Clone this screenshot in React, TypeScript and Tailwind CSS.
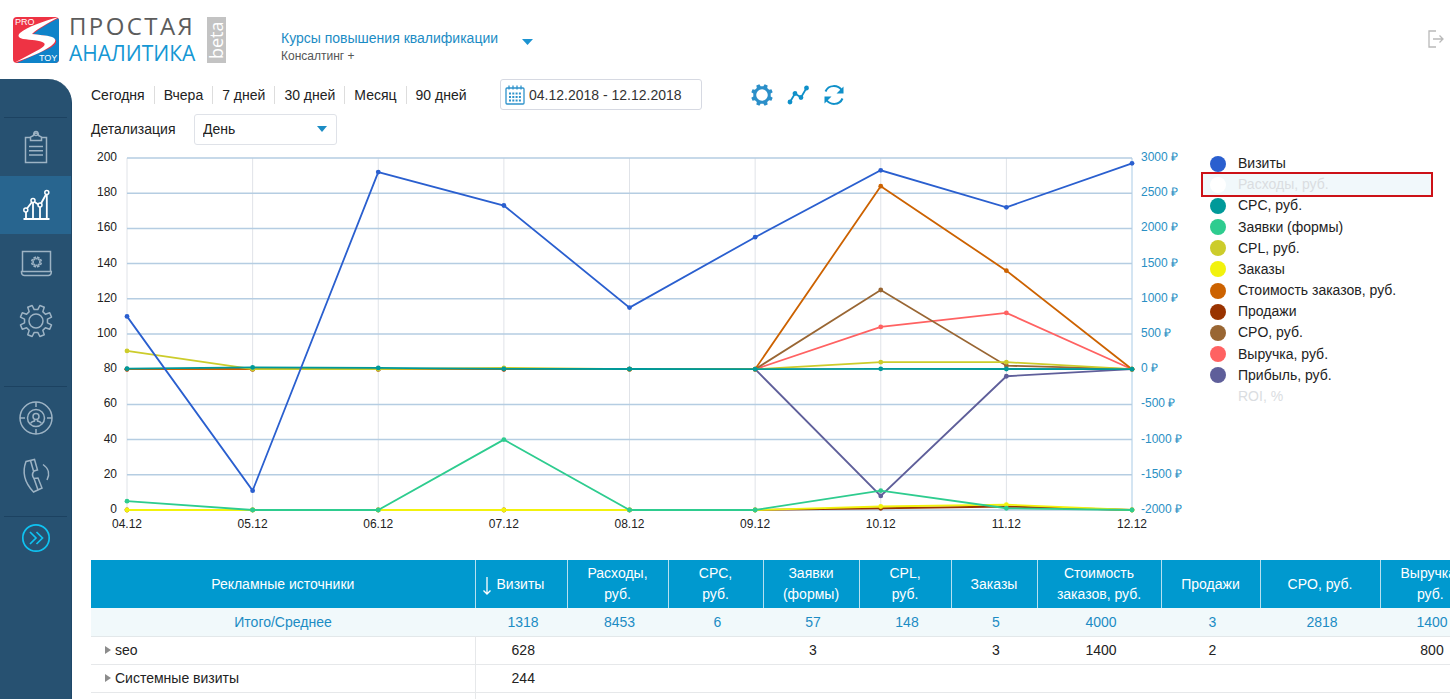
import { useState, type ReactNode } from 'react';
import clsx from 'clsx';

const DAYS = ['04.12', '05.12', '06.12', '07.12', '08.12', '09.12', '10.12', '11.12', '12.12'];

interface Series {
  name: string;
  color: string;
  axis: 'count' | 'money';
  values: number[];
}

/** Chart metrics in legend order. */
const SERIES: Series[] = [
  { name: 'Визиты', color: '#2a5fcf', axis: 'count', values: [110, 11, 192, 173, 115, 155, 193, 172, 197] },
  { name: 'Расходы, руб.', color: '#3399cc', axis: 'money', values: [] },
  { name: 'CPC, руб.', color: '#009999', axis: 'money', values: [8, 25, 18, 5, 3, 0, 5, 3, 0] },
  { name: 'Заявки (формы)', color: '#2ecc8f', axis: 'count', values: [5, 0, 0, 40, 0, 0, 11, 1, 0] },
  { name: 'CPL, руб.', color: '#cccc2b', axis: 'money', values: [260, 0, 0, 20, 0, 0, 100, 100, 0] },
  { name: 'Заказы', color: '#f2f20d', axis: 'count', values: [0, 0, 0, 0, 0, 0, 2, 3, 0] },
  { name: 'Стоимость заказов, руб.', color: '#cc6200', axis: 'money', values: [0, 0, 0, 0, 0, 0, 2600, 1400, 0] },
  { name: 'Продажи', color: '#993300', axis: 'count', values: [0, 0, 0, 0, 0, 0, 1, 2, 0] },
  { name: 'CPO, руб.', color: '#996633', axis: 'money', values: [0, 0, 0, 0, 0, 0, 1125, 50, 0] },
  { name: 'Выручка, руб.', color: '#ff6262', axis: 'money', values: [0, 0, 0, 0, 0, 0, 600, 800, 0] },
  { name: 'Прибыль, руб.', color: '#5f5f9a', axis: 'money', values: [0, 0, 0, 0, 0, 0, -1800, -100, 0] },
  { name: 'ROI, %', color: '#999999', axis: 'money', values: [] },
];

const COLUMNS = [
  { title: 'Рекламные источники', width: 'w-[384px]' },
  { title: 'Визиты', width: 'w-[92px]' },
  { title: 'Расходы, руб.', width: 'w-[101px]' },
  { title: 'CPC, руб.', width: 'w-[95px]' },
  { title: 'Заявки (формы)', width: 'w-[96px]' },
  { title: 'CPL, руб.', width: 'w-[92px]' },
  { title: 'Заказы', width: 'w-[86px]' },
  { title: 'Стоимость заказов, руб.', width: 'w-[124px]' },
  { title: 'Продажи', width: 'w-[99px]' },
  { title: 'CPO, руб.', width: 'w-[120px]' },
  { title: 'Выручка, руб.', width: 'w-[100px]' },
];

const TOTALS = ['1318', '8453', '6', '57', '148', '5', '4000', '3', '2818', '1400'];

const ROWS = [
  { source: 'seo', cells: ['628', '', '', '3', '', '3', '1400', '2', '', '800'] },
  { source: 'Системные визиты', cells: ['244', '', '', '', '', '', '', '', '', ''] },
  { source: '', cells: ['', '', '', '', '', '', '', '', '', ''] },
];

const PERIODS = ['Сегодня', 'Вчера', '7 дней', '30 дней', 'Месяц', '90 дней'];

/** Outline of a cog with `teeth` teeth around (c, c). */
function gearPath(c: number, teeth: number, outer: number, inner: number): string {
  const step = (Math.PI * 2) / teeth;
  const pts: string[] = [];
  for (let i = 0; i < teeth; i++) {
    const a = i * step + step / 2;
    const corners = [
      [a - step * 0.3, inner],
      [a - step * 0.19, outer],
      [a + step * 0.19, outer],
      [a + step * 0.3, inner],
    ];
    for (const [t, r] of corners) {
      pts.push(`${(c + r * Math.cos(t)).toFixed(2)} ${(c + r * Math.sin(t)).toFixed(2)}`);
    }
  }
  return `M${pts.join('L')}Z`;
}

function LogoMark() {
  return (
    <svg viewBox="0 0 46 46" className="size-[46px] shrink-0" aria-hidden="true">
      <defs>
        <clipPath id="mark">
          <rect width="46" height="46" rx="4" />
        </clipPath>
      </defs>
      <g clipPath="url(#mark)">
        <rect width="46" height="46" fill="#ee3344" />
        <path d="M46 1C36 6 27 11 20 17c8 1 17 2 22 5 3 3 0 6-5 9L4 46h42z" fill="#0f83c9" />
        <path
          d="M46 0C31 4 14 10 7 16c-3 3-1 5 3 6 8 1 17 1 21 4 2 2-1 4-4 6L1 46c13-5 27-10 37-17 5-4 6-7 1-9-6-2-14-2-20-3C24 12 35 6 46 0z"
          fill="#fff"
        />
        <text x="2" y="8" fontSize="9" fill="#fff" className="font-['Liberation_Sans',sans-serif]">PRO</text>
        <text x="26" y="44" fontSize="9" fill="#fff" className="font-['Liberation_Sans',sans-serif]">TOY</text>
      </g>
    </svg>
  );
}

function Header() {
  return (
    <header className="flex h-[79px] shrink-0 items-start pt-[17px] pr-[5px] pl-[13px]">
      <a href="#" className="flex w-[268px] items-start">
        <LogoMark />
        <span className="ml-[10px] flex w-[138px] flex-col font-['Open_Sans','Noto_Sans',sans-serif]">
          <span className="text-[24px] leading-[18px] tracking-widest text-[#5c5c5c]">ПРОСТАЯ</span>
          <span className="mt-[5px] text-[21px] leading-[26px] text-[#1597d4]">АНАЛИТИКА</span>
        </span>
        <span className="flex h-[46px] w-[19px] rotate-180 items-center justify-center bg-[#c3c3c3] font-['Open_Sans','Noto_Sans',sans-serif] text-[18px] leading-[19px] font-medium text-white [writing-mode:vertical-rl]">
          beta
        </span>
      </a>
      <div className="pt-3">
        <button type="button" className="flex items-center gap-6 text-[14px] leading-[18px] text-[#1c8cc4]">
          Курсы повышения квалификации
          <svg viewBox="0 0 11 6" className="mt-2 h-[6px] w-[11px]" fill="#1c93d1" aria-hidden="true">
            <path d="M0 0h11L5.500 6z" />
          </svg>
        </button>
        <p className="text-[12px] leading-[18px] text-[#555]">Консалтинг +</p>
      </div>
      <button type="button" aria-label="Выход" className="mt-3 ml-auto">
        <svg viewBox="0 0 20 20" className="size-5" fill="none" stroke="#b9b9b9" strokeWidth="1.300" aria-hidden="true">
          <path d="M11 2H4v16h7M8 10h10M14.500 6.500L18 10l-3.500 3.500" />
        </svg>
      </button>
    </header>
  );
}

function NavItem({ label, active = false, children }: { label: string; active?: boolean; children: ReactNode }) {
  return (
    <a
      href="#"
      aria-label={label}
      className={clsx(
        'flex h-[58px] items-center justify-center',
        active ? 'bg-[#28658f] text-white' : 'text-[#9db3c4]',
      )}
    >
      <svg viewBox="0 0 36 36" className="size-9" fill="none" stroke="currentColor" strokeWidth="1.500" aria-hidden="true">
        {children}
      </svg>
    </a>
  );
}

function NavDivider() {
  return <hr className="mx-1 border-[#1c4261]" />;
}

function Sidebar() {
  return (
    <nav className="w-[72px] shrink-0 rounded-tr-3xl border-r border-[#1f4869] bg-[#275171] pt-[38px]">
      <NavDivider />
      <NavItem label="Отчёты">
        <path d="M12.500 8.500H7.500v25h21v-25h-5" />
        <path d="M12.500 11.500V8.200l3-1.700a2.500 2.500 0 0 1 5 0l3 1.700v3.300z" />
        <circle cx="18" cy="4.500" r="2" />
        <path d="M11 17.500h14M11 21.700h14M11 26h14" />
      </NavItem>
      <NavItem label="Графики" active>
        <path d="M5.500 32h26M8 25v7M15 16v16M22 20v12M28.800 7v25" strokeWidth="1.800" />
        <path d="M9 21.500l5-6.500M16.500 15l4 2.500M23 16.500l5-9" strokeWidth="1.800" />
        <circle cx="7.800" cy="23" r="2" />
        <circle cx="15" cy="13.500" r="2" />
        <circle cx="22" cy="18" r="2" />
        <circle cx="28.800" cy="5.500" r="2" />
      </NavItem>
      <NavItem label="Сайты">
        <path d="M4.500 26V6.500h28V26M3.500 26.500h29.800v1a3 3 0 0 1-3 3H6.500a3 3 0 0 1-3-3z" />
        <path d={gearPath(18, 8, 5, 3.2)} transform="translate(0.500 -1)" strokeWidth="1.200" />
      </NavItem>
      <NavItem label="Настройки">
        <path d={gearPath(18, 8, 16, 11.6)} strokeLinejoin="round" />
        <circle cx="18" cy="18" r="7" />
      </NavItem>
      <div className="pt-9 pb-0.5">
        <NavDivider />
      </div>
      <NavItem label="Аудитория">
        <circle cx="18" cy="18" r="16" />
        <circle cx="18" cy="18" r="8.500" />
        <path d="M18 2v5M18 29v5M2 18h5M29 18h5" />
        <circle cx="18" cy="16.500" r="3" />
        <path d="M12.500 23.500c1-2 3-2 4-2.500v-1.500M23.500 23.500c-1-2-3-2-4-2.500v-1.500" />
      </NavItem>
      <NavItem label="Звонки">
        <path d="M8 3.500l8.500-2 3 10.500-3.500 1c-2 2.500-2 5 0 7.500l4-.5 4 10-8.500 4C6 24 4 14 8 3.500z" />
        <path d="M12.500 2.500l3 10.500M16 20.500l4 11.500" />
        <path d="M25 6.500c6 4 7 10 4 15.500" />
      </NavItem>
      <div className="pt-[11px]">
        <NavDivider />
      </div>
      <button type="button" aria-label="Развернуть меню" className="flex h-[42px] w-full items-center justify-center">
        <svg viewBox="0 0 30 30" className="size-[30px]" fill="none" stroke="#0fc3f2" strokeWidth="1.700" aria-hidden="true">
          <circle cx="15" cy="15" r="13.200" />
          <path d="M9 9l6 6-6 6M15.500 9l6 6-6 6" />
        </svg>
      </button>
    </nav>
  );
}

function Toolbar() {
  const [range, setRange] = useState('04.12.2018 - 12.12.2018');
  return (
    <>
      <div className="flex items-center text-[#222]">
        <div className="-ml-[9px] flex w-[418px] items-center">
          {PERIODS.map((p, i) => (
            <button
              key={p}
              type="button"
              className={clsx('px-[9px] text-[14px] leading-[18px]', i > 0 && 'border-l border-[#ddd]')}
            >
              {p}
            </button>
          ))}
        </div>
        <label className="flex h-[31px] w-[202px] items-center gap-1 rounded-[3px] border border-[#d6d9e2] pl-1">
          <svg viewBox="0 0 20 20" className="size-5 shrink-0" fill="none" stroke="#2f93cb" strokeWidth="1.300" aria-hidden="true">
            <rect x="1" y="3" width="18" height="16" rx="1" />
            <path d="M4 .5v4M8 .5v4M12 .5v4M16 .5v4" />
            <path d="M4 8.500h12M4 12h12M4 15.500h12" strokeDasharray="2 1.300" strokeWidth="2" />
          </svg>
          <input
            aria-label="Период"
            value={range}
            onChange={(e) => setRange(e.target.value)}
            className="min-w-0 flex-1 text-[14px] leading-[20px] text-[#333] outline-none"
          />
        </label>
        <div className="ml-[49px] flex items-center gap-[14px]">
          <button type="button" aria-label="Настройки">
            <svg viewBox="0 0 22 22" className="size-[22px]" fill="#2b8fc9" fillRule="evenodd" aria-hidden="true">
              <path d={`${gearPath(11, 8, 11, 8.8)}M16.800 11a5.800 5.800 0 1 0-11.600 0 5.800 5.800 0 1 0 11.600 0z`} />
            </svg>
          </button>
          <button type="button" aria-label="График">
            <svg viewBox="0 0 22 22" className="size-[22px]" fill="#0f90c9" stroke="#0f90c9" strokeWidth="1.800" aria-hidden="true">
              <path d="M3 18l5-8.500 6 4L19.500 4" fill="none" />
              <circle cx="3" cy="18" r="1.500" />
              <circle cx="8" cy="9.500" r="1.500" />
              <circle cx="14" cy="13.500" r="1.500" />
              <circle cx="19.500" cy="4" r="1.500" />
            </svg>
          </button>
          <button type="button" aria-label="Обновить">
            <svg viewBox="0 0 22 22" className="size-[22px]" fill="none" stroke="#0f90c9" strokeWidth="2" aria-hidden="true">
              <path d="M2.500 7.500C5.500 .5 15 .5 19 6.500M19.500 14.500c-3 7-12.500 7-16.500 1" />
              <path d="M20.500 2.500v7h-7zM1.500 19.500v-7h7z" fill="#0f90c9" stroke="none" />
            </svg>
          </button>
        </div>
      </div>
      <div className="mt-1 flex items-center">
        <label htmlFor="detail" className="w-[103px] text-[14px] text-[#222]">
          Детализация
        </label>
        <div className="relative">
          <select
            id="detail"
            className="h-[31px] w-[143px] appearance-none rounded-[3px] border border-[#dfe2e8] bg-white pl-2 text-[14px] text-[#222]"
          >
            <option>День</option>
            <option>Неделя</option>
            <option>Месяц</option>
          </select>
          <svg viewBox="0 0 10 6" className="pointer-events-none absolute top-3 right-[10px] h-[6px] w-[10px]" fill="#1c8cc4" aria-hidden="true">
            <path d="M0 0h10L5 6z" />
          </svg>
        </div>
      </div>
    </>
  );
}

const PLOT = { left: 36, right: 1041, top: 10, bottom: 362 };

function xAt(i: number): number {
  return PLOT.left + ((PLOT.right - PLOT.left) * i) / (DAYS.length - 1);
}

function yAt(axis: Series['axis'], v: number): number {
  const share = axis === 'count' ? v / 200 : (v + 2000) / 5000;
  return PLOT.bottom - share * (PLOT.bottom - PLOT.top);
}

function Chart() {
  const ticks = Array.from({ length: 11 }, (_, i) => i);
  // First metric in the legend is painted last, on top of the others.
  const painted = SERIES.filter((s) => s.values.length > 0).reverse();

  return (
    <svg viewBox="0 0 1110 392" className="h-auto min-w-0 flex-1 text-[12px]" role="img" aria-label="График показателей">
      {DAYS.map((d, i) => (
        <g key={d}>
          <line
            x1={xAt(i)}
            x2={xAt(i)}
            y1={PLOT.top}
            y2={PLOT.bottom}
            stroke={i === DAYS.length - 1 ? '#a9cbe6' : '#e0e3e8'}
          />
          <text x={xAt(i)} y="380" textAnchor="middle" fill="#222">
            {d}
          </text>
        </g>
      ))}
      {ticks.map((t) => {
        const y = yAt('count', t * 20);
        return (
          <g key={t}>
            <line x1={PLOT.left} x2={PLOT.right} y1={y} y2={y} stroke="#b5cde2" strokeWidth="1.500" />
            <text x="26" y={y + 3} textAnchor="end" fill="#222">
              {t * 20}
            </text>
            <text x="1050" y={y + 3} fill="#2a8fc4">
              {t * 500 - 2000} ₽
            </text>
          </g>
        );
      })}
      {painted.map((s) => (
        <g key={s.name} fill={s.color}>
          <polyline
            points={s.values.map((v, i) => `${xAt(i)},${yAt(s.axis, v)}`).join(' ')}
            fill="none"
            stroke={s.color}
            strokeWidth="1.800"
          />
          {s.values.map((v, i) => (
            <circle key={i} cx={xAt(i)} cy={yAt(s.axis, v)} r="2.400" />
          ))}
        </g>
      ))}
    </svg>
  );
}

function Legend() {
  return (
    <ul className="mt-[5px] mr-[17px] grid h-[254px] w-[232px] shrink-0 auto-rows-fr text-[14px] leading-[17px] text-[#222]">
      {SERIES.map((s) => {
        const off = s.values.length === 0;
        const highlighted = s.name === 'Расходы, руб.';
        return (
          <li
            key={s.name}
            className={clsx('-my-0.5 flex border-2', highlighted ? 'border-[#cc1117] bg-[#f1f8fb]' : 'border-transparent')}
          >
            <button type="button" className={clsx('flex flex-1 items-center gap-3 pl-[7px]', off && 'text-[#dadde1]')}>
              <span
                className={clsx('size-4 rounded-full', off && 'bg-white')}
                style={off ? undefined : { backgroundColor: s.color }}
              />
              {s.name}
            </button>
          </li>
        );
      })}
    </ul>
  );
}

function SourcesTable() {
  return (
    <table className="mt-5 w-[1389px] table-fixed border-collapse text-center text-[14px] leading-[20px]">
      <thead>
        <tr className="h-12 bg-[#0099cf] leading-[21px] text-white">
          {COLUMNS.map((c, i) => (
            <th
              key={c.title}
              scope="col"
              className={clsx(c.width, 'font-normal', i === 1 ? 'px-[7px]' : 'px-[18px]', i > 0 && 'border-l border-[#b5e0f0]')}
            >
              {i === 1 ? (
                <span className="flex items-center gap-[6px]">
                  <svg viewBox="0 0 8 18" className="mt-1 h-[18px] w-2 shrink-0" fill="none" stroke="currentColor" strokeWidth="1.300" aria-hidden="true">
                    <path d="M4 0v17M.5 13.500L4 17l3.500-3.500" />
                  </svg>
                  {c.title}
                </span>
              ) : (
                c.title
              )}
            </th>
          ))}
        </tr>
      </thead>
      <tbody>
        <tr className="h-7 border-b border-[#e3e8ea] bg-[#f1f9fb] text-[#1c8cc4]">
          <th scope="row" className="font-normal">
            Итого/Среднее
          </th>
          {TOTALS.map((v, i) => (
            <td key={i} className="pl-1">
              {v}
            </td>
          ))}
        </tr>
        {ROWS.map((r) => (
          <tr key={r.source} className="h-7 border-b border-[#e6e8ea] text-[#222]">
            <th scope="row" className="pl-[14px] text-left font-normal">
              {r.source && (
                <button type="button" className="flex items-center gap-1">
                  <svg viewBox="0 0 6 8" className="h-2 w-[6px]" fill="#8c8c8c" aria-hidden="true">
                    <path d="M0 0l6 4-6 4z" />
                  </svg>
                  {r.source}
                </button>
              )}
            </th>
            {r.cells.map((v, i) => (
              <td key={i} className={clsx('pl-1', i === 0 && 'border-l border-[#e6e8ea]')}>
                {v}
              </td>
            ))}
          </tr>
        ))}
      </tbody>
    </table>
  );
}

export default function App() {
  return (
    <div className="flex h-screen flex-col overflow-hidden bg-white font-['Liberation_Sans',Arial,sans-serif]">
      <Header />
      <div className="flex min-h-0 flex-1">
        <Sidebar />
        <main className="min-w-0 flex-1 overflow-hidden pl-[19px]">
          <Toolbar />
          <section className="mt-[3px] flex items-start">
            <Chart />
            <Legend />
          </section>
          <SourcesTable />
        </main>
      </div>
    </div>
  );
}
